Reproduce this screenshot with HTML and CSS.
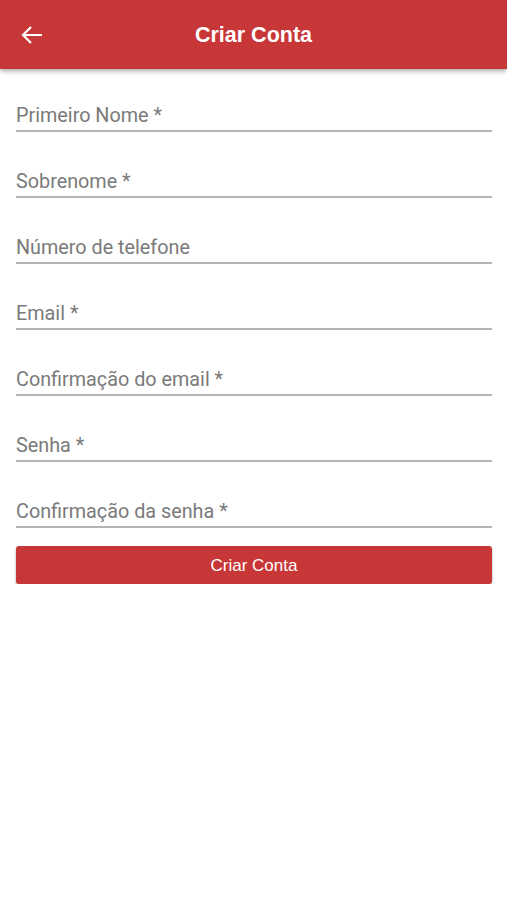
FILE: index.html
```html
<!DOCTYPE html>
<html>
  <head>
    <meta charset="utf-8">
    <meta name="viewport" content="width=device-width,initial-scale=1.0"/>
    <title>Criar Conta</title>
    <link rel="stylesheet" href="styles.css">
  </head>

  <body>
    <div id='header'>
      <a class='back'>
        <svg width='22' height='20' viewBox='0 0 22 20'>
          <path d='M21 10H2M10 2L2 10l8 8' fill='none' stroke='white' stroke-width='2.2'/>
        </svg>
      </a>
      <span class='title'>Criar Conta</span>
    </div>

    <div id='form'>
      <div class='field'><input type='text' placeholder='Primeiro Nome *'/></div>
      <div class='field'><input type='text' placeholder='Sobrenome *'/></div>
      <div class='field'><input type='tel' placeholder='Número de telefone'/></div>
      <div class='field'><input type='email' placeholder='Email *'/></div>
      <div class='field'><input type='email' placeholder='Confirmação do email *'/></div>
      <div class='field'><input type='password' placeholder='Senha *'/></div>
      <div class='field'><input type='password' placeholder='Confirmação da senha *'/></div>

      <button class='submit'>Criar Conta</button>
    </div>
  </body>
</html>
```

FILE: styles.css
```css
* {
  margin: 0;
  padding: 0;
  box-sizing: border-box;
}
html, body {
  background-color: white;
  font-family: Roboto, 'Liberation Sans', sans-serif;
}
#header {
  position: relative;
  height: 69px;
  background-color: #c83737;
  display: flex;
  align-items: center;
  justify-content: center;
  box-shadow: 0 2px 5px rgba(0, 0, 0, 0.35);
}
.back {
  position: absolute;
  left: 21px;
  top: 25px;
  width: 22px;
  height: 20px;
}
.title {
  color: white;
  font-family: 'Liberation Sans', Arial, sans-serif;
  font-weight: bold;
  font-size: 21.5px;
  margin-top: 2px;
}
#form {
  padding: 17px 15px 0 16px;
  display: flex;
  flex-direction: column;
  gap: 20px;
}
.field input {
  display: block;
  width: 100%;
  height: 46px;
  padding: 17px 0 3px 0;
  line-height: 24px;
  border: none;
  border-bottom: 2px solid #b5b5b5;
  outline: none;
  font-family: Roboto, sans-serif;
  font-size: 19.8px;
  color: #333;
}
.field input::placeholder {
  color: #7a7a7a;
}
.submit {
  margin-top: -2px;
  height: 38px;
  border: none;
  border-radius: 3px;
  background-color: #c83737;
  color: white;
  font-family: 'Liberation Sans', Arial, sans-serif;
  font-size: 17px;
  padding-top: 2px;
  box-shadow: 0 2px 3px rgba(0, 0, 0, 0.3);
}
```
